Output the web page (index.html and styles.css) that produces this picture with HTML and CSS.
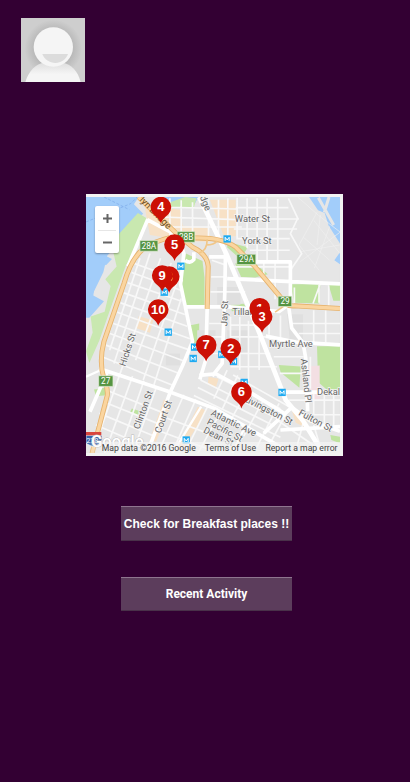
FILE: index.html
```html
<!DOCTYPE html>
<html lang="en">
<head>
<meta charset="utf-8">
<meta name="viewport" content="width=device-width, initial-scale=1">
<title>Breakfast places</title>
<link rel="stylesheet" href="styles.css">
</head>
<body>
<header class="profile">
  <svg class="avatar" viewBox="0 0 192 192" role="img" aria-label="Profile picture">
    <defs>
      <radialGradient id="shade"><stop offset=".66" stop-color="#b8b8b8"/><stop offset="1" stop-color="#cecece"/></radialGradient>
      <linearGradient id="body" x2="0" y2="1"><stop offset="0" stop-color="#dedede"/><stop offset=".6" stop-color="#f5f5f5"/></linearGradient>
    </defs>
    <path fill="#cecece" d="M0 0h192v192H0z"/>
    <circle cx="97" cy="91" r="86" fill="url(#shade)"/>
    <path fill="url(#body)" d="M13 192C23 158 45 136 70 134h55c25 4 46 25 54 58z"/>
    <circle cx="97" cy="87" r="59" fill="#f5f5f5"/>
    <path fill="#dcdcdc" d="M64 108h77c-6 16-21 27-38 27s-33-11-39-27z"/>
  </svg>
</header>
<main class="content">
  <section class="map" aria-label="Map of places">
    <svg class="map-art" viewBox="6 20 763 770">
      <defs>
        <g id="pin"><path fill="#cc1005" d="M0 49C-4 35-13 32-23 21A31 31 0 1 1 23 21C13 32 4 35 0 49z"/></g>
        <g id="metro"><path fill="#1eaaf1" d="M-11-11h22v22h-22z"/><path fill="none" stroke="#fff" stroke-width="3" d="M-6 6V-5L0 3 6-5V6"/></g>
        <linearGradient id="fade"><stop offset="0" stop-color="#f5f5f5" stop-opacity="0"/><stop offset=".1" stop-color="#f5f5f5" stop-opacity=".7"/></linearGradient>
      </defs>
      <path fill="#e6e6e6" d="M6 20h763v770H6z"/>
      <!-- Water -->
      <path fill="#a2cdfa" d="M6 20h158l-14 22 28 28-34 26-30 54-44 46-12 50-30 62-22 22zM228 20h116l-10 18-82 6zM676 20h93v140l-34-54-12-38-20-8zM752 210l17-24v36z"/>
      <path fill="none" stroke="#7ba9e8" stroke-width="2" stroke-dasharray="9 5" d="M6 95L140 40 160 20M60 20l76 38"/>
      <path fill="none" stroke="#e6e6e6" stroke-width="9" d="M704 22l46 82M736 20l-14 46"/>
      <!-- Parks -->
      <path fill="#c9e8b0" d="M106 130l56-62 30 18-42 105-24 34-38 106-42 120-30 68-10-36 20-56-6-48 42-14 18-78-16-20 34-38-12-52zM252 38l52-18 34 4-8 28-68 2z"/>
      <path fill="#bfe3a0" d="M306 190l50 22 6 50v90h-62l-10-80zM320 405l26-5v55l-18 6zM620 282h90l-4 58-74-2zM735 284l34-2v50h-20zM700 468h69v130h-40l-26-22zM585 525l66 4-4 64-56-46zM30 598l38-6-6 24-26 2zM144 655l22 8-4 12-24-9zM432 155l60 16-22 36-40-36zM454 220l54-6 44 38-38 10-42-2zM440 343l40-2 12 18-48 4zM740 735l29 5v20l-26-10z"/>
      <path fill="#a2cdfa" d="M6 258l28 18-6 40 32 17-44 50H6zM48 188l36 18-18 19-30-16z"/>
      <!-- Built-up districts -->
      <path fill="#f7e1c6" d="M182 46l34 4 74 8 6 48 78 8 8 40h-58l-126-20-12-62zM378 28h78v110h-36zM164 378l44 12-10 38-40-14zM240 628l24 12-48 116-18-8zM342 650l26 12-72 118-16-8zM624 660l34 12 22 48-44-22zM374 560l30 6-8 26-24-8z"/>
      <path fill="#dfdfdf" d="M340 420h55v50h-55zM430 420h65v66h-65zM610 372h48v76h-40zM400 290h70v54h-70zM246 490h42v36h-42z"/>
      <path fill="#f3dfe3" d="M664 530l44-4v104l-40-4z"/>
      <!-- Side streets -->
      <g fill="none" stroke="#f8f8f8" stroke-width="5">
        <path d="M168 204L77 480M198 190L90 520M230 204L112 540M262 218L155 510M282 268L178 570M292 325L210 585M151 220l146 52M143 247l148 53M132 278l161 55M120 308l183 65M110 338l200 70M100 366l218 80M88 400l230 80M78 430l228 85M66 465l220 85M60 502l208 84"/>
        <path d="M112 540L25 790M146 558L62 790M180 572L105 790M218 590L146 790M300 614L222 790M336 628L264 790M374 644L302 790M410 666L342 790M66 600l176 70M58 635l170 68M46 670l164 68M36 705l162 70M238 680l175 65M218 720l190 70"/>
        <path d="M230 50l228 6M230 80l230 8M224 110h250M258 24v112M292 30v114M326 36v114M374 30v116M404 28v120M432 24v120M460 22v126M490 24v150M520 24v190M550 24v190M582 26v184M456 52h158M456 86h190M450 116h190M458 145h160M498 180h120"/>
        <path d="M540 212v56M574 215v112M440 230h180M384 210l40 14M382 260h46M380 305h104M376 400h46M374 440h45M376 490h42M440 380v110M468 380v160M494 392v182M440 405h80M440 440h106M440 490h120M440 530h140M526 370v170M556 370v64M590 376v88M620 400h149M690 360v96M726 360v96M645 430h124M632 292v60M706 284v54M735 285v64M570 500h90M588 550h80M710 280l-22 60M680 500v96M690 606v70M722 604v104M750 604v118M616 630h153M640 674h129"/>
        <path d="M350 570l240 120M342 592l230 116M330 616l260 126M400 560l190 96M448 555l170 96M430 540l-40 86M462 556l-46 100M500 585l-60 106M540 628l-60 110M586 640l-66 130M608 670l-60 110M660 692l-22 84M690 705l24 80M626 720l143-10M580 690l130 90"/>
        <path stroke="#f0f0f0" stroke-width="2" d="M642 20l62 55 65 50M700 66l-54 98 60 76M769 126L650 214M658 140l80 70M690 90l79 100M652 184l117-20M710 74l-10 90M738 108l-46 126"/>
        <path d="M614 24l28 60-22 46 34 60-34 50"/>
      </g>
      <!-- Main streets -->
      <g fill="none" stroke="#fff" stroke-width="11" stroke-linejoin="round">
        <path stroke-width="14" d="M346 20l84 176 100 240 76 194 52 62 60 98"/>
        <path d="M282 135l18 55-10 92 36 172-28 68-38 82-60 158M192 86l-60 142M190 88l86 46M425 185l-2 120-8 215-30 38M370 354l-4 154-18 60M300 350h136l150 14 30-22M430 265l339 16M510 215h110v112M614 344l10 70 34 44 8 46 6 160M546 438l90 18 133 8M600 606h169M45 535l205 68 142 52 92 54 120 70M70 545l-52 120M346 556l50-5 100 54 104 64M610 642l70 50 89 32M540 730l84-78M590 720l179-10M376 200h50M330 186v22q-12 14-26 2"/>
        <path stroke-width="7" d="M6 560l40-18M352 650l-86 140M486 706l-40 84"/>
      </g>
      <!-- Expressways -->
      <g fill="none" stroke-linejoin="round">
        <path stroke="#e6b26c" stroke-width="15" d="M24 790l24-90 22-84q2-24-10-50-16-50 0-112l60-174q22-76 60-106 28-20 78-32M164 20l122 118 42 34q42 20 45 56l-3 128M258 142l80 1q80-1 118 28l54 54 82 98q12 26 40 24l137 8"/>
        <path stroke="#fad5a0" stroke-width="10" d="M24 790l24-90 22-84q2-24-10-50-16-50 0-112l60-174q22-76 60-106 28-20 78-32M164 20l122 118 42 34q42 20 45 56l-3 128M258 142l80 1q80-1 118 28l54 54 82 98q12 26 40 24l137 8"/>
        <path stroke="#f1c789" stroke-width="5" d="M370 148q0 34-24 40M400 152q-10 12-32 12M574 366q20-14 32-22"/>
      </g>
      <!-- Route shields -->
      <g fill="#559442" stroke="#e6f0d9" stroke-width="2">
        <path d="M168 151h54v32h-54zM280 124h53v32h-53zM459 192h57v31h-57zM583 318h41v31h-41zM44 557h43v32H44z"/>
      </g>
      <g class="shield-text"><text x="195" y="176">28A</text><text x="307" y="149">28B</text><text x="488" y="216">29A</text><text x="604" y="342">29</text><text x="65" y="582">27</text></g>
      <path fill="#3563ad" stroke="#fff" stroke-width="2" d="M6 736h48q6 22-22 34-10 0-26-10z"/><path fill="#d9453d" d="M6 726h46v10H6z"/>
      <text class="interstate" x="25" y="759">278</text>
      <!-- Street names -->
      <g class="street">
        <text x="453" y="95">Water St</text><text x="475" y="160">York St</text><text x="445" y="374">Tillary St</text><text x="556" y="472">Myrtle Ave</text><text x="700" y="616">Dekalb</text>
        <text transform="translate(430 408) rotate(-88)">Jay St</text>
        <text transform="translate(124 530) rotate(-72)">Hicks St</text>
        <text transform="translate(166 719) rotate(-70)">Clinton St</text>
        <text transform="translate(230 731) rotate(-70)">Court St</text>
        <text transform="translate(651 507) rotate(84)">Ashland Pl</text>
        <text transform="translate(478 632) rotate(27)">Livingston St</text>
        <text transform="translate(643 674) rotate(28)">Fulton St</text>
        <text transform="translate(379 675) rotate(26)">Atlantic Ave</text>
        <text transform="translate(367 701) rotate(28)">Pacific St</text>
        <text transform="translate(357 727) rotate(26)">Dean St</text>
        <text transform="translate(345 14) rotate(68)">idge</text>
        <text class="bridge" transform="translate(166 30) rotate(46)">lyn Bridge</text>
      </g>
      <use href="#metro" x="430" y="146"/><use href="#metro" x="291" y="228"/><use href="#metro" x="241" y="306"/><use href="#metro" x="253" y="426"/><use href="#metro" x="332" y="471"/><use href="#metro" x="328" y="505"/><use href="#metro" x="414" y="493"/><use href="#metro" x="449" y="514"/><use href="#metro" x="481" y="577"/><use href="#metro" x="595" y="607"/><use href="#metro" x="307" y="750"/>
      <text class="logo" x="21" y="770">Google</text>
      <!-- Numbered places -->
      <g class="pins">
        <use href="#pin" x="528" y="354"/><text x="528" y="367">1</text>
        <use href="#pin" x="256" y="259"/><text x="256" y="272">8</text>
        <use href="#pin" x="441" y="475"/><text x="441" y="488">2</text>
        <use href="#pin" x="535" y="379"/><text x="535" y="392">3</text>
        <use href="#pin" x="231" y="50"/><text x="231" y="63">4</text>
        <use href="#pin" x="272" y="163"/><text x="272" y="176">5</text>
        <use href="#pin" x="473" y="606"/><text x="473" y="619">6</text>
        <use href="#pin" x="367" y="465"/><text x="367" y="478">7</text>
        <use href="#pin" x="235" y="256"/><text x="235" y="269">9</text>
        <use href="#pin" x="223" y="358"/><text x="223" y="371">10</text>
      </g>
      <!-- Attribution -->
      <path fill="url(#fade)" d="M6 756h763v34H6z"/>
      <g class="attribution">
        <text x="53" y="782">Map data ©2016 Google</text>
        <a href="#terms"><text x="363" y="782">Terms of Use</text></a>
        <a href="#report"><text x="545" y="782">Report a map error</text></a>
      </g>
    </svg>
    <div class="zoom-controls">
      <button type="button" aria-label="Zoom in"><svg viewBox="0 0 9 9"><path d="M0 4.500h9M4.500 0v9"/></svg></button>
      <button type="button" aria-label="Zoom out"><svg viewBox="0 0 9 9"><path d="M0 4.500h9"/></svg></button>
    </div>
  </section>
  <nav class="actions">
    <button type="button" class="action">Check for Breakfast places !!</button>
    <button type="button" class="action action-recent">Recent Activity</button>
  </nav>
</main>
</body>
</html>
```
FILE: styles.css
```css
* { box-sizing: border-box; }
body {
  margin: 0;
  min-height: 100vh;
  background: #330033;
  font-family: Roboto, "Liberation Sans", sans-serif;
}
.profile { padding: 18px 21px 0; }
.avatar { display: block; width: 64px; height: 64px; }
.content { padding: 112px 67px 0 86px; }
.map {
  position: relative;
  border: solid #f2f2f2;
  border-width: 3px 3px 3px 0;
}
.map-art { display: block; width: 100%; height: auto; }
.map-art text { font-family: Roboto, sans-serif; }
.street text {
  font-size: 28px;
  fill: #666;
  stroke: #f5f5f5;
  stroke-width: 4px;
  paint-order: stroke;
}
.street .bridge { fill: #6b4d26; stroke: none; }
.shield-text text { font-size: 25px; fill: #fff; text-anchor: middle; }
.map-art .interstate { font-size: 22px; fill: #fff; text-anchor: middle; }
.map-art .logo {
  font-size: 50px;
  font-weight: 500;
  fill: #fff;
  stroke: #bbb;
  stroke-width: 3px;
  paint-order: stroke;
}
.pins text {
  font-family: "Liberation Sans", sans-serif;
  font-size: 39px;
  font-weight: bold;
  fill: #fff;
  text-anchor: middle;
}
.attribution text { font-size: 26px; fill: #444; }
.zoom-controls {
  position: absolute;
  top: 9px;
  left: 9px;
  width: 24px;
  padding: 0 3px;
  border-radius: 2px;
  background: #fff;
  box-shadow: 0 1px 2px #0005;
}
.zoom-controls button {
  display: flex;
  align-items: center;
  justify-content: center;
  width: 100%;
  height: 24px;
  padding: 0;
  border: 0;
  background: none;
}
.zoom-controls button + button { height: 23px; border-top: 1px solid #e6e6e6; }
.zoom-controls svg { width: 9px; height: 9px; }
.zoom-controls path { stroke: #666; stroke-width: 2; }
.actions {
  display: flex;
  flex-direction: column;
  gap: 36px;
  padding: 50px 51px 24px 35px;
}
.action {
  height: 35px;
  padding: 0;
  border: solid #5c3d5c;
  border-width: 1px 0;
  border-top-color: #8f758f;
  border-bottom-color: #493149;
  background: #5c3d5c;
  color: #fff;
  font: bold 12px "Liberation Sans", sans-serif;
  white-space: nowrap;
}
.action-recent { height: 34px; font-family: Roboto, sans-serif; }
```
